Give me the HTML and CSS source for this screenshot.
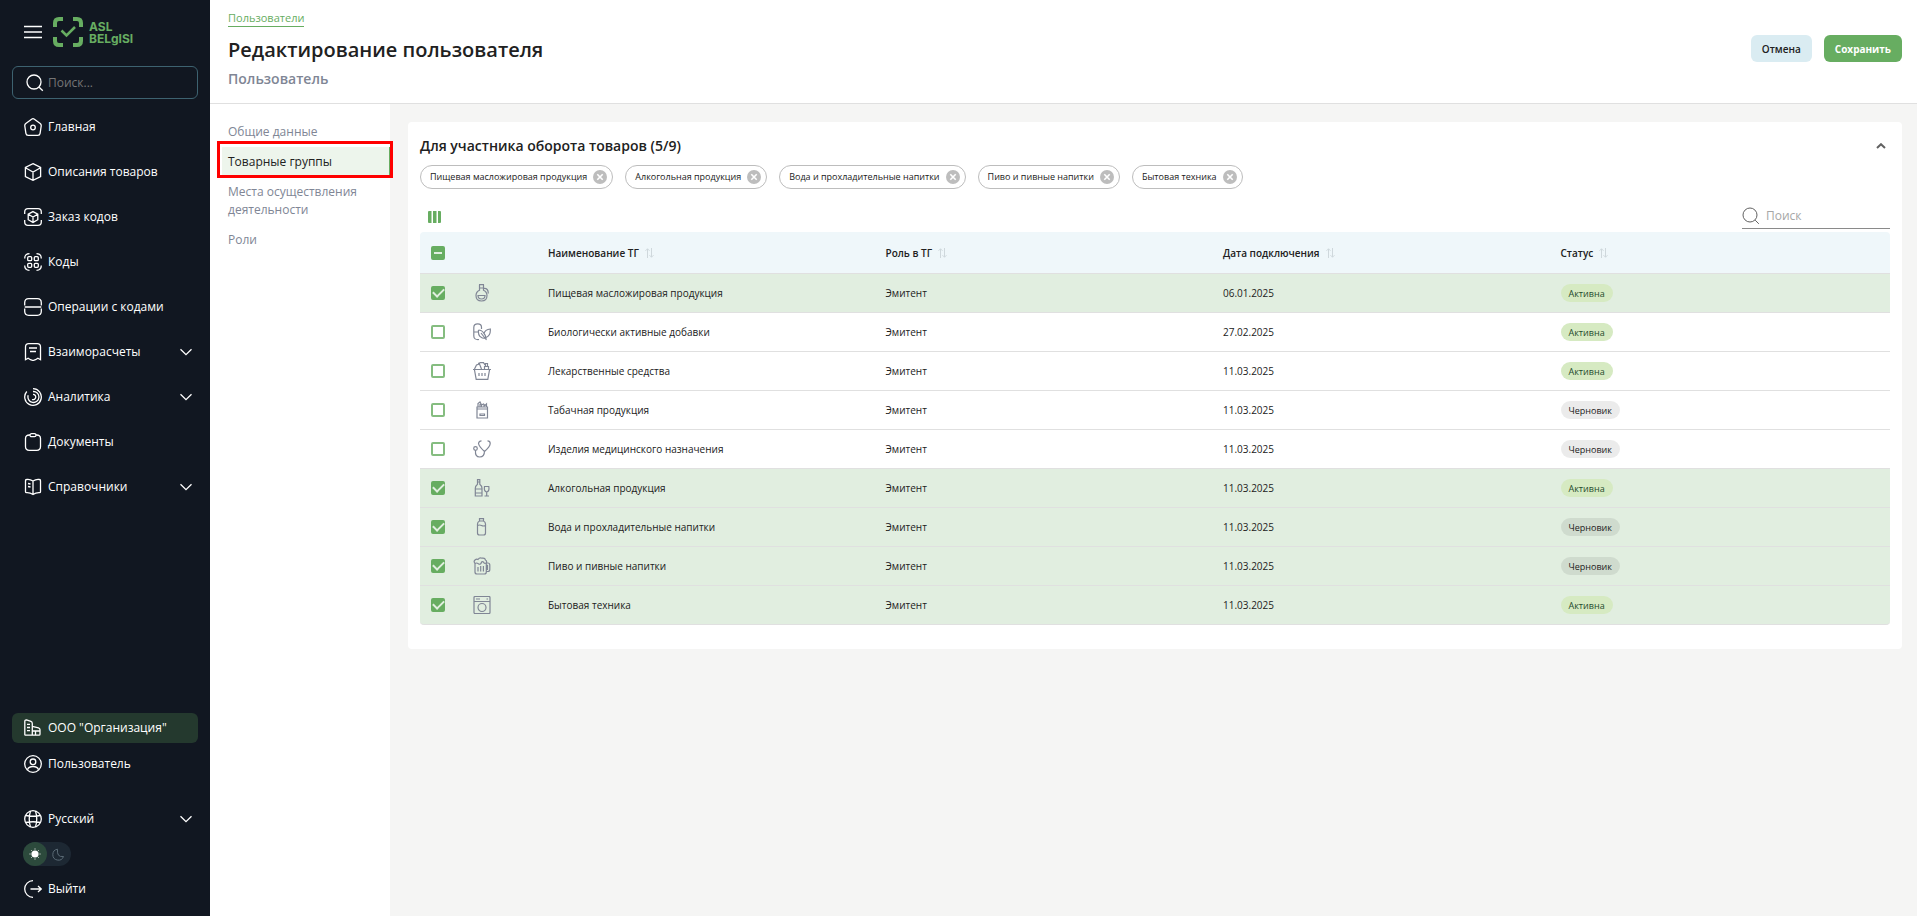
FILE: index.html
```html
<!DOCTYPE html>
<html lang="ru">
<head>
<meta charset="utf-8">
<meta name="viewport" content="width=device-width, initial-scale=1">
<title>Редактирование пользователя</title>
<link rel="stylesheet" href="styles.css">
</head>
<body>
<svg class="sprite" aria-hidden="true">
  <symbol id="i-menu" viewBox="0 0 18 18"><path d="M0 3.5h18M0 9h18M0 14.5h18"/></symbol>
  <symbol id="i-search" viewBox="0 0 18 18"><circle cx="8" cy="8" r="7"/><path d="M13.2 13.2l3.6 3.6"/></symbol>
  <symbol id="i-home" viewBox="0 0 18 18"><path d="M7.6 1.200 1.800 5.600Q.6 6.500.8 8l1.100 7.300q.3 2 2.300 2h9.600q2 0 2.300-2L17.200 8q.2-1.500-1-2.400l-5.800-4.400q-1.400-1-2.800 0z"/><circle cx="9" cy="9.500" r="2.300"/></symbol>
  <symbol id="i-box" viewBox="0 0 18 18"><path d="M9 .7 16.600 4.500v9L9 17.300 1.400 13.500v-9zM1.400 4.700 9 9l7.600-4.300M9 9v8"/></symbol>
  <symbol id="i-order" viewBox="0 0 18 18"><path d="M.7 6V4Q.7.7 4 .7h10q3.300 0 3.300 3.300v2M.7 12v2q0 3.300 3.300 3.300h10q3.300 0 3.300-3.300v-2M9 3.600l4.800 2.600v5.500L9 14.400l-4.800-2.700V6.200zM4.300 6.300 9 9l4.700-2.700M9 9v5"/></symbol>
  <symbol id="i-codes" viewBox="0 0 18 18"><path d="M.7 5.500Q.7.700 5.500.7M12.500.7q4.800 0 4.800 4.800M.7 12.500q0 4.800 4.800 4.800M12.500 17.300q4.800 0 4.800-4.800"/><rect x="3.700" y="3.700" width="4" height="4" rx="1"/><rect x="10.300" y="3.700" width="4" height="4" rx="1"/><rect x="3.700" y="10.300" width="4" height="4" rx="1"/><rect x="10.300" y="10.300" width="4" height="4" rx="1"/></symbol>
  <symbol id="i-ops" viewBox="0 0 18 18"><path d="M.7 7.500V4.700q0-4 4-4h8.600q4 0 4 4v2.800M.7 10.500v2.800q0 4 4 4h8.600q4 0 4-4v-2.800M.7 9h16.600"/></symbol>
  <symbol id="i-bill" viewBox="0 0 18 18"><path d="M1.500 16.700V4Q1.500.7 4.700.7h8.600q3.200 0 3.200 3.300v12.700l-2.600-1.500-2.400 1.500L9 17.500l-2.500-.8-2.400-1.500zM5 5h8M6 8.500h6"/></symbol>
  <symbol id="i-chart" viewBox="0 0 18 18"><path d="M2.800 3.500A8.300 8.300 0 1 0 9 .7M4.200 7.300A5.500 5.500 0 1 0 9 3.500M8 11.500A2.700 2.700 0 1 0 9 6.300"/></symbol>
  <symbol id="i-doc" viewBox="0 0 18 18"><path d="M6 2q-4.500-.3-4.500 3.500v8q0 3.800 3.800 3.800h7.400q3.800 0 3.800-3.800v-8Q16.500 1.700 12 2"/><rect x="6" y=".7" width="6" height="3" rx="1.500"/></symbol>
  <symbol id="i-book" viewBox="0 0 18 18"><path d="M9 3Q5.500.8 2.500 1.500q-1 .2-1 1.200v11q0 1 1 1Q6 14.500 9 16.500q3-2 6.500-1.800 1 0 1-1v-11q0-1-1-1.200Q12.500.8 9 3zM9 3v13.500M4 5.500l2.500.5M4 8.500l2.500.5"/></symbol>
  <symbol id="i-org" viewBox="0 0 18 18"><path d="M.8 15.500v-13Q.8.800 2.500.9l4.400 1.500q1.400.5 1.400 2v11.800H1.600q-.8 0-.8-.7zM3 5.300h3M3 8.500h3M3 11.700h3M8.300 7.300l6.200 1.500q1.500.4 1.500 2v4.400q0 1-1 1H8.300M8.300 12H16M11.500 12v4"/></symbol>
  <symbol id="i-user" viewBox="0 0 18 18"><circle cx="9" cy="9" r="8.300"/><circle cx="9" cy="6.800" r="2.800"/><path d="M3.500 14.800Q4.500 11.500 9 11.500t5.500 3.300"/></symbol>
  <symbol id="i-globe" viewBox="0 0 18 18"><circle cx="9" cy="9" r="8.300"/><path d="M6.500 1Q4 9 6.500 17M11.500 1q2.500 8 0 16M1.500 5.500q7.500 1.500 15 0M1.500 12.500q7.500-1.500 15 0"/></symbol>
  <symbol id="i-exit" viewBox="0 0 18 18"><path d="M9 .7a8.300 8.300 0 0 0 0 16.600M6.500 9h11M14 6l3.300 3L14 12"/></symbol>
  <symbol id="i-down" viewBox="0 0 12 8"><path d="M.5 1.200 6 6.700l5.500-5.500"/></symbol>
  <symbol id="i-up" viewBox="0 0 10 6"><path d="M1 5l4-3.800L9 5"/></symbol>
  <symbol id="i-sort" viewBox="0 0 9 10"><path d="M2.500 10V.8M.5 2.800l2-2 2 2M6.500 0v9.200M4.500 7.200l2 2 2-2"/></symbol>
  <symbol id="i-x" viewBox="0 0 14 14"><circle cx="7" cy="7" r="7" fill="#bdbdbd" stroke="none"/><path d="M4.300 4.300l5.400 5.400M9.700 4.300 4.300 9.700" stroke="#fff" stroke-width="1.600"/></symbol>
  <symbol id="g-oil" viewBox="0 0 18 18"><path d="M6 .7h5M6.500.7v5.600Q3 8 3 11.500q0 5.500 5.500 5.500T14 11.500Q14 8 10.500 6.300V.7M6.500 4h4M10.800 4.500q4.500-.5 4.500 5M5 11.500h7q0 3.500-3.500 3.500T5 11.500z"/></symbol>
  <symbol id="g-bio" viewBox="0 0 18 18"><path d="M6 16.500Q.8 17 .8 13V4.500Q.8.800 4.700.8T8.500 4.500V6M.8 9H5M5.500 7q3.500 0 5.500 3.500 1-4 6.300-4.500.5 6.500-4.300 8.500M5.500 7q-1 8.500 7.500 8.500 0-3-2-5M8 10l5.500 7"/></symbol>
  <symbol id="g-basket" viewBox="0 0 18 18"><path d="M0 7.500h18M1.500 8l1.700 9.300h11.600L16.500 8M1.500 7l2-4 3-1 2 5M5 1.500 7.500.7h3L12 3M11.500 7V4.500h4V7M12.500 4.500v-3h2v3M6 11v3M9 11v3M12 11v3"/></symbol>
  <symbol id="g-tobacco" viewBox="0 0 18 18"><path d="M4 6h10.500v11H4zM4 8h10.500M5 6V2.500l2-1.500 1.500 3V6M8.500 4l2-1 1.500 1.500L13.500 3v3M7 5.500V3M11 6V4M7 13h4.500v1.500H7z"/></symbol>
  <symbol id="g-stetho" viewBox="0 0 18 18"><path d="M8.500.8Q6 .8 5.500 3.500 6 6.500 11.500 11.500 17.200 6.500 17.200 3.500 17.200.8 14.500.8M11.500 11q0 6-4.800 6T2.500 10.500"/><circle cx="2.500" cy="8.500" r="1.800"/></symbol>
  <symbol id="g-wine" viewBox="0 0 18 18"><path d="M4.500.7h2.300v4.500q2.200 1.800 2.200 4V17H2.300V9.200q0-2.200 2.200-4zM2.300 10H9M2.300 14H9M4.500 3h2.300M11.500 7.500h4.300q.8 5-2.100 5.500-3-.5-2.200-5.500zM13.700 13v4M11.500 17h4.500"/></symbol>
  <symbol id="g-water" viewBox="0 0 18 18"><path d="M6.500.7h4V3h-4zM6.500 3Q4.500 4 4.500 6v9q0 2 2 2h4q2 0 2-2V6q0-2-2-3M4.500 7.500q2-1 4 0t4 0"/></symbol>
  <symbol id="g-beer" viewBox="0 0 18 18"><path d="M2 6.500Q.3 4.500 2 3t3-.5Q6.500.3 9 1.200q3-.5 3.500 1.800 1.700 1 .8 3Q11 7 10.500 5 8.500 4 8 6.500 6 8 5 6.500q-1.500-1-3 0V15q0 2 2 2h7.300q2 0 2-2V6M13.300 6h1.500q2 0 2 2v4.500q0 2-2 2h-1.500M13.300 8.300h1.200v4h-1.200M5 10v4.500M7.700 9v5.500M10.400 9v5.500"/></symbol>
  <symbol id="g-washer" viewBox="0 0 18 18"><rect x="1" y=".5" width="16" height="17" rx="1"/><path d="M1 5.500h16M3 3h4M13.500 3h1.500"/><circle cx="9" cy="11.500" r="4"/></symbol>
</svg>

<div class="app">
  <aside class="sidebar">
    <div class="brand">
      <button class="icon-btn" type="button" aria-label="Меню"><svg class="icon"><use href="#i-menu"/></svg></button>
      <svg class="logo" viewBox="0 0 84 30" role="img" aria-label="ASL Belgisi">
        <g fill="none" stroke="#67ad61" stroke-width="4">
          <path d="M2 10V6q0-4 4-4h4M20 2h4q4 0 4 4v4M28 20v4q0 4-4 4h-4M10 28H6q-4 0-4-4v-4"/>
          <path d="M8.500 13.500l5 5L22 10" stroke-width="2.500"/>
        </g>
        <g class="logo-text"><text x="36" y="14">ASL</text><text x="36" y="26">BELgISI</text></g>
      </svg>
    </div>
    <label class="side-search">
      <svg class="icon"><use href="#i-search"/></svg>
      <input type="search" placeholder="Поиск..." aria-label="Поиск по меню">
    </label>
    <nav class="menu">
      <a class="item" href="#"><svg class="icon"><use href="#i-home"/></svg>Главная</a>
      <a class="item" href="#"><svg class="icon"><use href="#i-box"/></svg>Описания товаров</a>
      <a class="item" href="#"><svg class="icon"><use href="#i-order"/></svg>Заказ кодов</a>
      <a class="item" href="#"><svg class="icon"><use href="#i-codes"/></svg>Коды</a>
      <a class="item" href="#"><svg class="icon"><use href="#i-ops"/></svg>Операции с кодами</a>
      <button class="item" type="button"><svg class="icon"><use href="#i-bill"/></svg>Взаиморасчеты<svg class="arrow"><use href="#i-down"/></svg></button>
      <button class="item" type="button"><svg class="icon"><use href="#i-chart"/></svg>Аналитика<svg class="arrow"><use href="#i-down"/></svg></button>
      <a class="item" href="#"><svg class="icon"><use href="#i-doc"/></svg>Документы</a>
      <button class="item" type="button"><svg class="icon"><use href="#i-book"/></svg>Справочники<svg class="arrow"><use href="#i-down"/></svg></button>
    </nav>
    <div class="account">
      <a class="item item-current" href="#"><svg class="icon"><use href="#i-org"/></svg>ООО "Организация"</a>
      <a class="item" href="#"><svg class="icon"><use href="#i-user"/></svg>Пользователь</a>
    </div>
    <div class="settings">
      <button class="item" type="button"><svg class="icon"><use href="#i-globe"/></svg>Русский<svg class="arrow"><use href="#i-down"/></svg></button>
      <button class="theme" type="button" aria-label="Сменить тему">
        <svg viewBox="0 0 48 24">
          <circle cx="12" cy="12" r="12" fill="#2c4a3c" stroke="none"/>
          <circle cx="12" cy="12" r="3.600" fill="#fff" stroke="none"/>
          <path d="M12 6.500v1M12 16.500v1M6.500 12h1M16.500 12h1M8 8l.6.6M15.400 15.400l.6.600M8 16l.6-.6M15.400 8.600 16 8" stroke="#fff"/>
          <path d="M34.500 7.200a5.500 5.500 0 1 0 6 7.300Q33.500 15.500 34.500 7.200z" fill="none" stroke="#5b6b76"/>
        </svg>
      </button>
      <button class="item" type="button"><svg class="icon"><use href="#i-exit"/></svg>Выйти</button>
    </div>
  </aside>

  <div class="page">
    <header class="head">
      <div class="head-text">
        <a class="crumb" href="#">Пользователи</a>
        <h1>Редактирование пользователя</h1>
        <p>Пользователь</p>
      </div>
      <div class="actions">
        <button class="btn btn-light" type="button">Отмена</button>
        <button class="btn btn-green" type="button">Сохранить</button>
      </div>
    </header>
    <div class="body">
      <nav class="tabs">
        <a href="#">Общие данные</a>
        <a class="tab-active" href="#">Товарные группы</a>
        <a href="#">Места осуществления деятельности</a>
        <a href="#">Роли</a>
      </nav>
      <main class="content">
        <section class="card">
          <div class="card-head">
            <h2>Для участника оборота товаров (5/9)</h2>
            <button class="icon-btn" type="button" aria-label="Свернуть"><svg class="fold"><use href="#i-up"/></svg></button>
          </div>
          <div class="chips">
            <span class="chip">Пищевая масложировая продукция<button class="icon-btn" type="button" aria-label="Убрать"><svg><use href="#i-x"/></svg></button></span>
            <span class="chip">Алкогольная продукция<button class="icon-btn" type="button" aria-label="Убрать"><svg><use href="#i-x"/></svg></button></span>
            <span class="chip">Вода и прохладительные напитки<button class="icon-btn" type="button" aria-label="Убрать"><svg><use href="#i-x"/></svg></button></span>
            <span class="chip">Пиво и пивные напитки<button class="icon-btn" type="button" aria-label="Убрать"><svg><use href="#i-x"/></svg></button></span>
            <span class="chip">Бытовая техника<button class="icon-btn" type="button" aria-label="Убрать"><svg><use href="#i-x"/></svg></button></span>
          </div>
          <div class="tools">
            <button class="icon-btn" type="button" aria-label="Столбцы"><svg class="cols" viewBox="0 0 14 12"><path d="M0 1q0-1 1-1h2.500v12H1q-1 0-1-1zM5 0h3.500v12H5zM10 0h2q1 0 1 1v10q0 1-1 1h-2z"/></svg></button>
            <label class="find"><svg class="icon"><use href="#i-search"/></svg><input type="search" placeholder="Поиск" aria-label="Поиск по таблице"></label>
          </div>
          <table class="grid">
            <thead>
              <tr>
                <th class="c-check"><input class="check check-mixed" type="checkbox" aria-label="Выбрать все"></th>
                <th class="c-icon"></th>
                <th>Наименование ТГ<svg class="sort"><use href="#i-sort"/></svg></th>
                <th>Роль в ТГ<svg class="sort"><use href="#i-sort"/></svg></th>
                <th>Дата подключения<svg class="sort"><use href="#i-sort"/></svg></th>
                <th>Статус<svg class="sort"><use href="#i-sort"/></svg></th>
              </tr>
            </thead>
            <tbody>
              <tr class="on"><td class="c-check"><input class="check" type="checkbox" checked aria-label="Пищевая масложировая продукция"></td><td><svg class="good"><use href="#g-oil"/></svg></td><td>Пищевая масложировая продукция</td><td>Эмитент</td><td>06.01.2025</td><td><span class="tag tag-active">Активна</span></td></tr>
              <tr><td class="c-check"><input class="check" type="checkbox" aria-label="Биологически активные добавки"></td><td><svg class="good"><use href="#g-bio"/></svg></td><td>Биологически активные добавки</td><td>Эмитент</td><td>27.02.2025</td><td><span class="tag tag-active">Активна</span></td></tr>
              <tr><td class="c-check"><input class="check" type="checkbox" aria-label="Лекарственные средства"></td><td><svg class="good"><use href="#g-basket"/></svg></td><td>Лекарственные средства</td><td>Эмитент</td><td>11.03.2025</td><td><span class="tag tag-active">Активна</span></td></tr>
              <tr><td class="c-check"><input class="check" type="checkbox" aria-label="Табачная продукция"></td><td><svg class="good"><use href="#g-tobacco"/></svg></td><td>Табачная продукция</td><td>Эмитент</td><td>11.03.2025</td><td><span class="tag">Черновик</span></td></tr>
              <tr><td class="c-check"><input class="check" type="checkbox" aria-label="Изделия медицинского назначения"></td><td><svg class="good"><use href="#g-stetho"/></svg></td><td>Изделия медицинского назначения</td><td>Эмитент</td><td>11.03.2025</td><td><span class="tag">Черновик</span></td></tr>
              <tr class="on"><td class="c-check"><input class="check" type="checkbox" checked aria-label="Алкогольная продукция"></td><td><svg class="good"><use href="#g-wine"/></svg></td><td>Алкогольная продукция</td><td>Эмитент</td><td>11.03.2025</td><td><span class="tag tag-active">Активна</span></td></tr>
              <tr class="on"><td class="c-check"><input class="check" type="checkbox" checked aria-label="Вода и прохладительные напитки"></td><td><svg class="good"><use href="#g-water"/></svg></td><td>Вода и прохладительные напитки</td><td>Эмитент</td><td>11.03.2025</td><td><span class="tag">Черновик</span></td></tr>
              <tr class="on"><td class="c-check"><input class="check" type="checkbox" checked aria-label="Пиво и пивные напитки"></td><td><svg class="good"><use href="#g-beer"/></svg></td><td>Пиво и пивные напитки</td><td>Эмитент</td><td>11.03.2025</td><td><span class="tag">Черновик</span></td></tr>
              <tr class="on"><td class="c-check"><input class="check" type="checkbox" checked aria-label="Бытовая техника"></td><td><svg class="good"><use href="#g-washer"/></svg></td><td>Бытовая техника</td><td>Эмитент</td><td>11.03.2025</td><td><span class="tag tag-active">Активна</span></td></tr>
            </tbody>
          </table>
        </section>
      </main>
    </div>
  </div>
</div>
</body>
</html>
```

FILE: styles.css
```css
* { box-sizing: border-box; }

body {
  margin: 0;
  font: 12px/18px "Segoe UI", "Open Sans", "Noto Sans", sans-serif;
  color: #212121;
  background: #f5f5f4;
}

h1, h2, p { margin: 0; }
a { color: inherit; text-decoration: none; }
button, input { font: inherit; color: inherit; }
button { border: 0; padding: 0; background: none; cursor: pointer; }
svg { display: block; fill: none; stroke: currentColor; flex: none; }
input[type="search"] {
  min-width: 0;
  width: 100%;
  padding: 0;
  border: 0;
  outline: 0;
  background: none;
  appearance: none;
}

.sprite { position: absolute; width: 0; height: 0; }
.icon { width: 18px; height: 18px; }
.icon-btn { display: flex; }

.app { display: flex; min-height: 100vh; }

/* Sidebar */
.sidebar {
  display: flex;
  flex-direction: column;
  flex: none;
  width: 210px;
  padding: 17px 12px 12px;
  background: #111721;
  color: #fff;
}
.sidebar .icon, .arrow { stroke-width: 1.3; }
.brand { display: flex; align-items: center; gap: 11px; padding-left: 12px; }
.logo { width: 84px; height: 30px; }
.logo-text { font: 700 12px/12px Inter, sans-serif; fill: #67ad61; stroke: none; }
.side-search {
  display: flex;
  align-items: center;
  gap: 4px;
  height: 33px;
  margin-top: 19px;
  padding: 0 12px 0 13px;
  border: 1px solid #3d6270;
  border-radius: 6px;
}
.side-search input::placeholder { color: #757575; opacity: 1; }
.menu { display: flex; flex-direction: column; gap: 15px; margin-top: 13px; }
.item {
  display: flex;
  align-items: center;
  gap: 6px;
  width: 100%;
  height: 30px;
  padding: 0 6px 0 12px;
  border-radius: 6px;
  text-align: left;
}
.item-current { background: #24392e; }
.arrow { width: 12px; height: 8px; margin-left: auto; }
.account { display: flex; flex-direction: column; gap: 6px; margin-top: auto; }
.settings { display: flex; flex-direction: column; gap: 8px; margin-top: 25px; }
.theme { width: 48px; height: 24px; margin-left: 11px; border-radius: 12px; background: #1d2833; }

/* Page header */
.page { display: flex; flex-direction: column; flex: 1; min-width: 0; }
.head {
  display: flex;
  align-items: flex-start;
  justify-content: space-between;
  height: 104px;
  padding: 10px 15px 0 18px;
  border-bottom: 1px solid #e0e0e0;
  background: #fff;
}
.head-text { display: flex; flex-direction: column; align-items: flex-start; }
.crumb { font-size: 11px; line-height: 16px; color: #67ad61; border-bottom: 1px solid #67ad61; }
.head h1 { margin-top: 9px; font-size: 20px; line-height: 28px; font-weight: 600; }
.head p { margin-top: 5px; font-size: 14px; line-height: 20px; font-weight: 600; color: #808695; }
.actions { display: flex; gap: 12px; margin-top: 25px; }
.btn { height: 27px; padding: 0 11px; border-radius: 6px; font-size: 10px; font-weight: 600; }
.btn-light { background: #daecf2; }
.btn-green { background: #67ad61; color: #fff; font-weight: 700; }

/* Section tabs */
.body { display: flex; flex: 1; }
.tabs {
  display: flex;
  flex-direction: column;
  flex: none;
  width: 180px;
  padding: 13px 0 0 12px;
  background: #fff;
  color: #808695;
}
.tabs a { padding: 6px 24px 6px 6px; }
.tabs .tab-active {
  position: relative;
  border-right: 1px solid #67ad61;
  background: #edf5ec;
  color: #212121;
}
.tab-active::after {
  content: "";
  position: absolute;
  inset: -6px -4px -1px -5px;
  border: 3px solid #f00;
}

/* Card */
.content { flex: 1; min-width: 0; padding: 18px 15px 18px 18px; }
.card { padding: 11px 12px 24px; border-radius: 4px; background: #fff; }
.card-head { display: flex; align-items: center; justify-content: space-between; height: 26px; padding-right: 4px; }
.card-head h2 { font-size: 14px; line-height: 24px; font-weight: 600; }
.fold { width: 10px; height: 6px; color: #616161; stroke-width: 2; }
.chips { display: flex; flex-wrap: wrap; gap: 12px; margin-top: 6px; }
.chip {
  display: flex;
  align-items: center;
  gap: 6px;
  height: 24px;
  padding: 0 5px 0 9px;
  border: 1px solid #bdbdbd;
  border-radius: 12px;
  font-size: 9px;
}
.chip svg { width: 14px; height: 14px; }
.tools { display: flex; align-items: center; justify-content: space-between; margin-top: 15px; padding-left: 8px; }
.cols { width: 14px; height: 12px; fill: #67ad61; stroke: none; }
.find {
  display: flex;
  align-items: center;
  gap: 6px;
  width: 148px;
  height: 25px;
  border-bottom: 1px solid #8a8a8a;
  color: #616161;
}
.find input::placeholder { color: #a6a6a6; opacity: 1; }

/* Table */
.grid { width: 100%; margin-top: 3px; table-layout: fixed; border-collapse: separate; border-spacing: 0; font-size: 10px; }
.grid th, .grid td { height: 39px; padding: 0 8px; border-bottom: 1px solid #e0e0e0; text-align: left; vertical-align: middle; }
.grid th { height: 42px; background: #eff7fa; font-weight: 600; }
.grid .c-check { width: 45px; padding-left: 11px; }
.c-icon { width: 75px; }
.grid .on td { background: #e1eee0; }
.grid th:first-child { border-top-left-radius: 4px; }
.grid th:last-child { border-top-right-radius: 4px; }
.grid tr:last-child td:first-child { border-bottom-left-radius: 4px; }
.grid tr:last-child td:last-child { border-bottom-right-radius: 4px; }
.sort { display: inline-block; width: 9px; height: 10px; margin-left: 6px; vertical-align: -1px; color: #cfd8dc; }
.good { width: 18px; height: 18px; color: #808695; stroke-width: 1.2; }
.check {
  display: grid;
  place-items: center;
  width: 14px;
  height: 14px;
  margin: 0;
  appearance: none;
  border: 2px solid #85bd80;
  border-radius: 2px;
  background: #fff;
}
.check:checked, .check-mixed { border-color: #67ad61; background: #67ad61; }
.check:checked::after {
  content: "";
  width: 9px;
  height: 5px;
  margin-bottom: 3px;
  border: solid #e1eee0;
  border-width: 0 0 2px 2px;
  transform: rotate(-45deg);
}
.check-mixed::after { content: ""; width: 8px; height: 2px; background: #e1eee0; }
.tag {
  display: block;
  width: fit-content;
  height: 18px;
  padding: 0 8px;
  border-radius: 9px;
  background: rgba(0, 0, 0, 0.08);
  font-size: 9px;
  line-height: 20px;
}
.tag-active { background: #d6eac2; color: #1f4a2c; }
```
